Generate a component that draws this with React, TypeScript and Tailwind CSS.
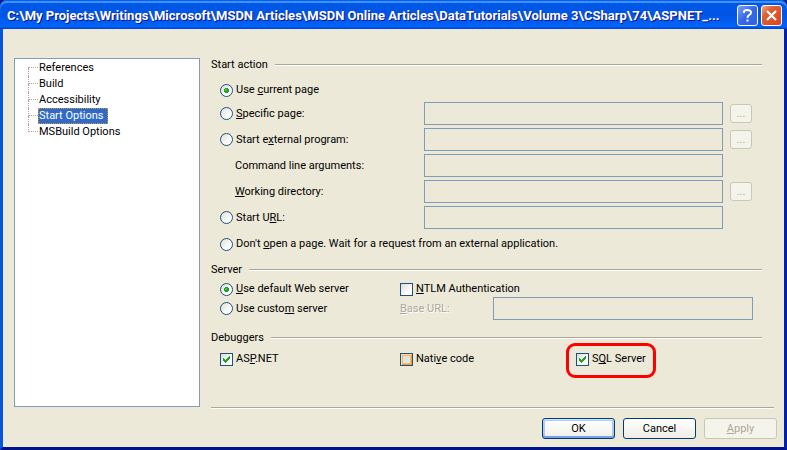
import { useState } from 'react';
import type { ReactNode } from 'react';
import clsx from 'clsx';

const pages = ['References', 'Build', 'Accessibility', 'Start Options', 'MSBuild Options'];

const title =
  'C:\\My Projects\\Writings\\Microsoft\\MSDN Articles\\MSDN Online Articles\\DataTutorials\\Volume 3\\CSharp\\74\\ASPNET_...';

// "Use _current page" underlines the letter after the underscore
const Mnemonic = ({ text }: { text: string }) => {
  const at = text.indexOf('_');
  if (at < 0) return <span>{text}</span>;
  return (
    <span>
      {text.slice(0, at)}
      <u className="underline-offset-1">{text[at + 1]}</u>
      {text.slice(at + 2)}
    </span>
  );
};

type RadioProps = {
  name: string;
  label: string;
  checked: boolean;
  onSelect: () => void;
};

const Radio = ({ name, label, checked, onSelect }: RadioProps) => (
  <label className="flex items-center gap-[3px] whitespace-nowrap">
    <span className="relative h-[13px] w-[13px] shrink-0">
      <input
        type="radio"
        name={name}
        checked={checked}
        onChange={onSelect}
        className="block h-[13px] w-[13px] appearance-none rounded-full border border-[#1c5180] bg-linear-to-br from-[#dcdcd7] to-white to-70%"
      />
      {checked && (
        <svg viewBox="0 0 13 13" className="pointer-events-none absolute inset-0 h-[13px] w-[13px]">
          <path d="M5 4h3v1h1v3h-1v1h-3v-1h-1v-3h1z" fill="#21a121" />
          <path d="M5 5h2v2h-2z" fill="#41c441" />
        </svg>
      )}
    </span>
    <Mnemonic text={label} />
  </label>
);

type CheckProps = {
  label: string;
  hot?: boolean;
  defaultChecked?: boolean;
};

const Check = ({ label, hot, defaultChecked = false }: CheckProps) => {
  const [checked, setChecked] = useState(defaultChecked);
  return (
    <label className="flex h-4 items-center gap-[3px] whitespace-nowrap">
      <span className="relative h-[13px] w-[13px] shrink-0">
        <input
          type="checkbox"
          checked={checked}
          onChange={(e) => setChecked(e.target.checked)}
          className={clsx(
            'block h-[13px] w-[13px] appearance-none border border-[#1c5180] bg-linear-to-br from-[#dcdcd7]',
            hot
              ? 'to-[#ebebe8] shadow-[inset_1px_1px_0_#fcdca4,inset_-1px_-1px_0_#f29b3c,inset_0_0_0_2px_#f9b85f]'
              : 'to-white to-70%'
          )}
        />
        {checked && (
          <svg viewBox="0 0 13 13" className="pointer-events-none absolute inset-0 h-[13px] w-[13px]">
            <path d="M3 5h1v1h1v1h1v-1h1v-1h1v-1h1v-1h1v3h-1v1h-1v1h-1v1h-1v1h-1v-1h-1v-1h-1z" fill="#21a121" />
          </svg>
        )}
      </span>
      <Mnemonic text={label} />
    </label>
  );
};

const Heading = ({ children }: { children: ReactNode }) => (
  <div className="flex h-[14px] items-center gap-[7px]">
    <h2>{children}</h2>
    <Rule />
  </div>
);

const Rule = () => <div className="h-[2px] flex-1 border-t border-[#aca899] bg-white" />;

type FieldRowProps = {
  children: ReactNode;
  name: string;
  browse?: boolean;
};

const FieldRow = ({ children, name, browse }: FieldRowProps) => (
  <div className="grid h-[23px] grid-cols-[204px_1fr_22px] items-center">
    {children}
    <input
      id={name}
      type="text"
      disabled
      aria-label={name}
      className="mr-[7px] h-[23px] min-w-0 border border-[#7f9db9] px-1"
    />
    {browse && (
      <button
        type="button"
        disabled
        aria-label={`Browse ${name}`}
        className="h-[19px] rounded-[3px] border border-[#c9c7ba] bg-[#f5f4ea] leading-[14px] text-[#aca899]"
      >
        ...
      </button>
    )}
  </div>
);

const TitleBar = () => (
  <header className="flex h-[29px] items-center gap-[3px] rounded-t-[7px] bg-linear-to-b from-[#0058e6] via-[#0055e5] to-[#0066ff] pt-[2px] pr-[5px] pl-[7px] shadow-[inset_0_1px_0_#0b5be6,inset_0_3px_0_#3a93ff,inset_0_-1px_0_#0046d0,inset_0_-2px_0_#0054ea]">
    <h1 className="min-w-0 flex-1 overflow-hidden font-[Roboto,sans-serif] text-[13px] leading-5 font-bold whitespace-nowrap text-white [text-shadow:1px_1px_0_#0f1089]">
      {title}
    </h1>
    <button
      type="button"
      aria-label="Help"
      className="grid h-[21px] w-[21px] shrink-0 place-items-center rounded-[3px] border border-white bg-linear-to-br from-[#7a9ff5] via-[#3567e8] to-[#2f62e6]"
    >
      <svg viewBox="0 0 19 19" className="h-[19px] w-[19px]" fill="none" stroke="#fff" strokeWidth="2">
        <path d="M6 7V6Q6 4 9 4Q13 4 13 6.5Q13 8 11 9.2Q9.5 10 9.5 12M9.5 13.5v2" />
      </svg>
    </button>
    <button
      type="button"
      aria-label="Close"
      className="grid h-[21px] w-[21px] shrink-0 place-items-center rounded-[3px] border border-white bg-linear-to-br from-[#f0a070] from-5% via-[#da6334] via-30% to-[#e0401a]"
    >
      <svg viewBox="0 0 19 19" className="h-[19px] w-[19px]" stroke="#fff" strokeWidth="2.2">
        <path d="M5 5l9 9M14 5l-9 9" />
      </svg>
    </button>
  </header>
);

const PageTree = () => {
  const [current, setCurrent] = useState('Start Options');
  return (
    <nav className="mb-[2px] w-[186px] shrink-0 border border-[#7f9db9] bg-white pt-px pl-[13px]">
      <ul>
        {pages.map((page, i) => (
          <li key={page} className="flex h-4">
            <span className="flex w-[10px] flex-col">
              <span className={clsx('h-2 border-b border-dotted border-[#aca899]', i > 0 && 'border-l')} />
              <span className={clsx('h-2 border-dotted border-[#aca899]', i < pages.length - 1 && 'border-l')} />
            </span>
            <button
              type="button"
              onClick={() => setCurrent(page)}
              className={clsx(
                'h-4 border pr-1 leading-[14px]',
                page === current ? 'border-dotted border-[#ce953a] bg-[#316ac5] text-white' : 'border-transparent'
              )}
            >
              {page}
            </button>
          </li>
        ))}
      </ul>
    </nav>
  );
};

const StartOptions = () => {
  const [action, setAction] = useState('current');
  const [server, setServer] = useState('default');

  const actionRadio = (id: string, label: string) => (
    <Radio name="action" label={label} checked={action === id} onSelect={() => setAction(id)} />
  );

  return (
    <main className="flex min-w-0 flex-1 flex-col">
      <section className="pr-[12px]">
        <Heading>Start action</Heading>
        <div className="flex flex-col gap-[3px] pt-[6px] pr-[10px] pl-[9px]">
          <div className="-mb-[3px] flex h-6 items-center">{actionRadio('current', 'Use _current page')}</div>
          <FieldRow name="Page" browse>
            {actionRadio('page', '_Specific page:')}
          </FieldRow>
          <FieldRow name="Program" browse>
            {actionRadio('program', 'Start e_xternal program:')}
          </FieldRow>
          <FieldRow name="Arguments">
            <label htmlFor="Arguments" className="pl-[15px]">
              <Mnemonic text="Command line ar_guments:" />
            </label>
          </FieldRow>
          <FieldRow name="Directory" browse>
            <label htmlFor="Directory" className="pl-[15px]">
              <Mnemonic text="_Working directory:" />
            </label>
          </FieldRow>
          <FieldRow name="URL">{actionRadio('url', 'Start U_RL:')}</FieldRow>
          <div className="flex h-6 items-center">
            {actionRadio('none', "Don't _open a page. Wait for a request from an external application.")}
          </div>
        </div>
      </section>

      <section className="pt-[7px] pr-[12px]">
        <Heading>Server</Heading>
        <div className="grid grid-cols-[180px_93px_1fr] items-center px-[9px] pt-1">
          <div className="flex h-4 items-center">
            <Radio
              name="server"
              label="_Use default Web server"
              checked={server === 'default'}
              onSelect={() => setServer('default')}
            />
          </div>
          <div className="col-span-2">
            <Check label="_NTLM Authentication" />
          </div>
          <Radio
            name="server"
            label="Use custo_m server"
            checked={server === 'custom'}
            onSelect={() => setServer('custom')}
          />
          <label htmlFor="base-url" className="text-[#aca899] [text-shadow:1px_1px_0_#fff]">
            <Mnemonic text="_Base URL:" />
          </label>
          <input
            id="base-url"
            type="text"
            disabled={server === 'default'}
            className="h-[23px] min-w-0 border border-[#7f9db9] px-1"
          />
        </div>
      </section>

      <section className="pt-[11px] pr-[12px]">
        <Heading>Debuggers</Heading>
        <div className="grid grid-cols-[180px_176px_1fr] px-[9px] pt-[6px]">
          <Check label="AS_P.NET" defaultChecked />
          <Check label="Nati_ve code" hot />
          <div className="relative justify-self-start">
            <Check label="S_QL Server" defaultChecked />
            <span className="pointer-events-none absolute -top-2 -right-[10px] -bottom-[11px] -left-[10px] rounded-[9px] border-3 border-[#ff0000]" />
          </div>
        </div>
      </section>

      <div className="mt-auto flex pt-4">
        <Rule />
      </div>
    </main>
  );
};

const dialogButton = 'h-[21px] w-[73px] rounded-[3px] border leading-[19px]';

const App = () => (
  <div className="flex min-h-screen flex-col bg-[#0a1a8c] font-[Roboto,'DejaVu_Sans',sans-serif] text-[11px] leading-[14px] text-black">
    <TitleBar />
    <div className="flex flex-1 flex-col border-x-3 border-t-0 border-b-3 border-r-[#0020b0] border-b-[#00138c] border-l-[#0855dd] bg-[#ece9d8]">
      <div className="flex flex-1 gap-[11px] pt-[29px] pr-[10px] pl-[11px]">
        <PageTree />
        <StartOptions />
      </div>
      <footer className="flex justify-end gap-2 pt-[9px] pr-[7px] pb-2">
        <button
          type="button"
          className={clsx(
            dialogButton,
            'border-[#003c74] bg-linear-to-b from-white to-[#f0f0ea] shadow-[inset_0_1px_0_#cee7ff,inset_0_-2px_0_#7f9fe8,inset_0_0_0_2px_#b0c8f4]'
          )}
        >
          OK
        </button>
        <button type="button" className={clsx(dialogButton, 'border-[#003c74] bg-linear-to-b from-white to-[#eeece4]')}>
          Cancel
        </button>
        <button type="button" disabled className={clsx(dialogButton, 'border-[#c9c7ba] bg-[#f5f4ea] text-[#aca899]')}>
          <Mnemonic text="_Apply" />
        </button>
      </footer>
    </div>
  </div>
);

export default App;
